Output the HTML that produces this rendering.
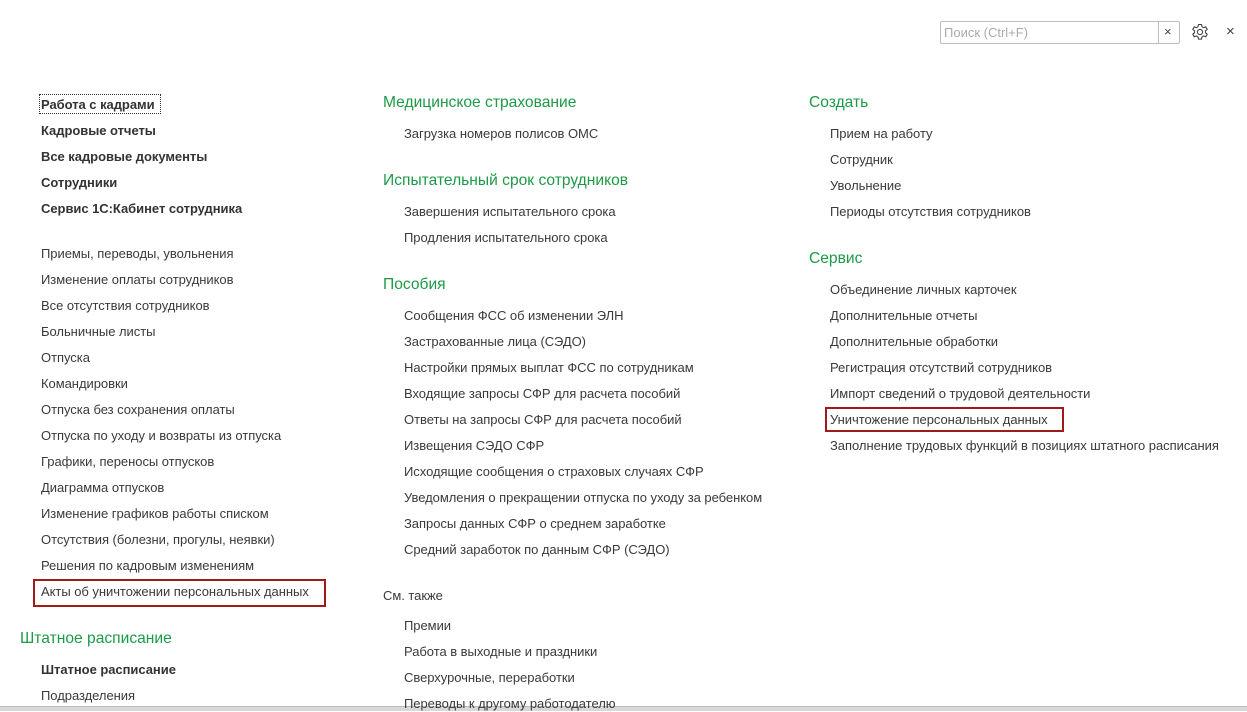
<!DOCTYPE html>
<html><head><meta charset="utf-8"><style>
body{margin:0;width:1247px;height:710px;background:#fff;position:relative;overflow:hidden;font-family:"Liberation Sans",Arial,sans-serif;color:#333}
.i{position:absolute;font-size:13px;line-height:16px;white-space:nowrap;color:#3a3a3a;margin-top:1px;letter-spacing:-0.04px}
.b{font-weight:bold;color:#333}
.h{position:absolute;font-size:15.6px;line-height:20px;color:#1d9a46;white-space:nowrap;margin-top:1px}
.box{position:absolute;border:2px solid #a11a1a;box-sizing:border-box}
</style></head><body>
<div style="position:absolute;left:940px;top:21px;width:240px;height:23px;border:1px solid #bdbdbd;border-radius:2px;box-sizing:border-box"></div>
<div style="position:absolute;left:1158px;top:21px;width:1px;height:23px;background:#bdbdbd"></div>
<div style="position:absolute;left:944px;top:25px;font-size:13px;line-height:16px;color:#aaa">Поиск (Ctrl+F)</div>
<div style="position:absolute;left:1164px;top:24px;font-size:13px;line-height:16px;color:#444">×</div>
<svg style="position:absolute;left:1191px;top:23px" width="18" height="18" viewBox="0 0 18 18"><path d="M7.5 1.5h3l.5 2.2 1.6.9 2.1-.8 1.5 2.6-1.7 1.5v1.8l1.7 1.5-1.5 2.6-2.1-.8-1.6.9-.5 2.2h-3l-.5-2.2-1.6-.9-2.1.8-1.5-2.6 1.7-1.5V7.9L1.8 6.4l1.5-2.6 2.1.8 1.6-.9z" fill="none" stroke="#444" stroke-width="1.1"/><circle cx="9" cy="9" r="2.6" fill="none" stroke="#444" stroke-width="1.1"/></svg>
<div style="position:absolute;left:1226px;top:23px;font-size:15px;color:#444">×</div>
<div style="position:absolute;left:0;top:706px;width:1247px;height:4px;background:#d8d8d8;border-top:1px solid #bbb"></div>

<div style="position:absolute;left:39px;top:94px;width:122px;height:20px;border:1px dotted #333;box-sizing:border-box"></div>
<div class="i b" style="left:41px;top:96px">Работа с кадрами</div>
<div class="i b" style="left:41px;top:122px">Кадровые отчеты</div>
<div class="i b" style="left:41px;top:148px">Все кадровые документы</div>
<div class="i b" style="left:41px;top:174px">Сотрудники</div>
<div class="i b" style="left:41px;top:200px">Сервис 1С:Кабинет сотрудника</div>
<div class="i" style="left:41px;top:245px">Приемы, переводы, увольнения</div>
<div class="i" style="left:41px;top:271px">Изменение оплаты сотрудников</div>
<div class="i" style="left:41px;top:297px">Все отсутствия сотрудников</div>
<div class="i" style="left:41px;top:323px">Больничные листы</div>
<div class="i" style="left:41px;top:349px">Отпуска</div>
<div class="i" style="left:41px;top:375px">Командировки</div>
<div class="i" style="left:41px;top:401px">Отпуска без сохранения оплаты</div>
<div class="i" style="left:41px;top:427px">Отпуска по уходу и возвраты из отпуска</div>
<div class="i" style="left:41px;top:453px">Графики, переносы отпусков</div>
<div class="i" style="left:41px;top:479px">Диаграмма отпусков</div>
<div class="i" style="left:41px;top:505px">Изменение графиков работы списком</div>
<div class="i" style="left:41px;top:531px">Отсутствия (болезни, прогулы, неявки)</div>
<div class="i" style="left:41px;top:557px">Решения по кадровым изменениям</div>
<div class="i" style="left:41px;top:583px">Акты об уничтожении персональных данных</div>
<div class="box" style="left:33px;top:579px;width:293px;height:28px"></div>
<div class="h" style="left:20px;top:628px">Штатное расписание</div>
<div class="i b" style="left:41px;top:661px">Штатное расписание</div>
<div class="i" style="left:41px;top:687px">Подразделения</div>

<div class="h" style="left:383px;top:92px">Медицинское страхование</div>
<div class="i" style="left:404px;top:125px">Загрузка номеров полисов ОМС</div>
<div class="h" style="left:383px;top:170px">Испытательный срок сотрудников</div>
<div class="i" style="left:404px;top:203px">Завершения испытательного срока</div>
<div class="i" style="left:404px;top:229px">Продления испытательного срока</div>
<div class="h" style="left:383px;top:274px">Пособия</div>
<div class="i" style="left:404px;top:307px">Сообщения ФСС об изменении ЭЛН</div>
<div class="i" style="left:404px;top:333px">Застрахованные лица (СЭДО)</div>
<div class="i" style="left:404px;top:359px">Настройки прямых выплат ФСС по сотрудникам</div>
<div class="i" style="left:404px;top:385px">Входящие запросы СФР для расчета пособий</div>
<div class="i" style="left:404px;top:411px">Ответы на запросы СФР для расчета пособий</div>
<div class="i" style="left:404px;top:437px">Извещения СЭДО СФР</div>
<div class="i" style="left:404px;top:463px">Исходящие сообщения о страховых случаях СФР</div>
<div class="i" style="left:404px;top:489px">Уведомления о прекращении отпуска по уходу за ребенком</div>
<div class="i" style="left:404px;top:515px">Запросы данных СФР о среднем заработке</div>
<div class="i" style="left:404px;top:541px">Средний заработок по данным СФР (СЭДО)</div>
<div class="i" style="left:383px;top:587px">См. также</div>
<div class="i" style="left:404px;top:617px">Премии</div>
<div class="i" style="left:404px;top:643px">Работа в выходные и праздники</div>
<div class="i" style="left:404px;top:669px">Сверхурочные, переработки</div>
<div class="i" style="left:404px;top:695px">Переводы к другому работодателю</div>

<div class="h" style="left:809px;top:92px">Создать</div>
<div class="i" style="left:830px;top:125px">Прием на работу</div>
<div class="i" style="left:830px;top:151px">Сотрудник</div>
<div class="i" style="left:830px;top:177px">Увольнение</div>
<div class="i" style="left:830px;top:203px">Периоды отсутствия сотрудников</div>
<div class="h" style="left:809px;top:248px">Сервис</div>
<div class="i" style="left:830px;top:281px">Объединение личных карточек</div>
<div class="i" style="left:830px;top:307px">Дополнительные отчеты</div>
<div class="i" style="left:830px;top:333px">Дополнительные обработки</div>
<div class="i" style="left:830px;top:359px">Регистрация отсутствий сотрудников</div>
<div class="i" style="left:830px;top:385px">Импорт сведений о трудовой деятельности</div>
<div class="i" style="left:830px;top:411px">Уничтожение персональных данных</div>
<div class="box" style="left:825px;top:407px;width:239px;height:25px"></div>
<div class="i" style="left:830px;top:437px">Заполнение трудовых функций в позициях штатного расписания</div>
</body></html>
